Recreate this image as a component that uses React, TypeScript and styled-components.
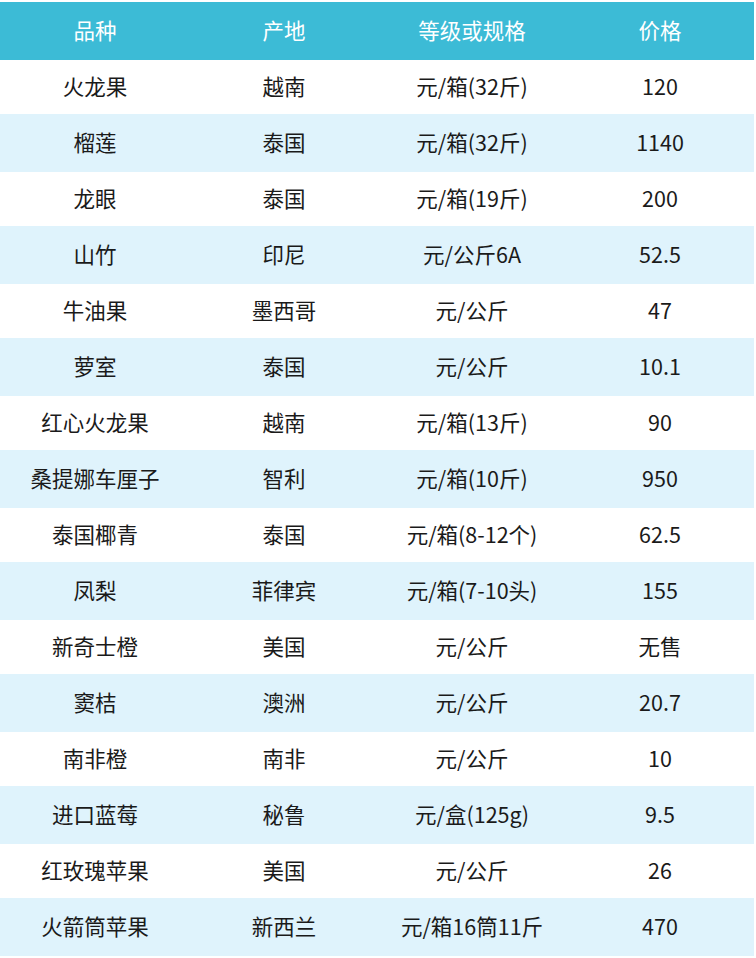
import React from "react";
import styled, { createGlobalStyle } from "styled-components";

const Global = createGlobalStyle`
  html, body { margin: 0; padding: 0; background: #ffffff; }
  body { font-family: "Noto Sans CJK SC", "Noto Sans", sans-serif; }
`;

const Table = styled.div`
  width: 754px;
  margin-top: 2px;
  display: flex;
  flex-direction: column;
`;

const Row = styled.div<{ $kind: "head" | "odd" | "even" }>`
  display: grid;
  grid-template-columns: 190px 188px 188px 188px;
  align-items: center;
  box-sizing: border-box;
  padding-bottom: ${(p) => (p.$kind === "head" ? 3 : 2)}px;
  height: ${(p) => (p.$kind === "odd" ? 54 : 58)}px;
  background: ${(p) =>
    p.$kind === "head" ? "#3cbbd6" : p.$kind === "even" ? "#dff3fc" : "#ffffff"};
  color: ${(p) => (p.$kind === "head" ? "#ffffff" : "#1a1a1a")};
`;

const Cell = styled.div`
  text-align: center;
  font-size: 21.5px;
  line-height: 1;
  white-space: nowrap;
`;

const head = ["品种", "产地", "等级或规格", "价格"];
const rows: string[][] = [
  ["火龙果", "越南", "元/箱(32斤)", "120"],
  ["榴莲", "泰国", "元/箱(32斤)", "1140"],
  ["龙眼", "泰国", "元/箱(19斤)", "200"],
  ["山竹", "印尼", "元/公斤6A", "52.5"],
  ["牛油果", "墨西哥", "元/公斤", "47"],
  ["萝室", "泰国", "元/公斤", "10.1"],
  ["红心火龙果", "越南", "元/箱(13斤)", "90"],
  ["桑提娜车厘子", "智利", "元/箱(10斤)", "950"],
  ["泰国椰青", "泰国", "元/箱(8-12个)", "62.5"],
  ["凤梨", "菲律宾", "元/箱(7-10头)", "155"],
  ["新奇士橙", "美国", "元/公斤", "无售"],
  ["窦桔", "澳洲", "元/公斤", "20.7"],
  ["南非橙", "南非", "元/公斤", "10"],
  ["进口蓝莓", "秘鲁", "元/盒(125g)", "9.5"],
  ["红玫瑰苹果", "美国", "元/公斤", "26"],
  ["火箭筒苹果", "新西兰", "元/箱16筒11斤", "470"],
];

export default function App() {
  return (
    <>
      <Global />
      <Table>
        <Row $kind="head">
          {head.map((h) => (
            <Cell key={h}>{h}</Cell>
          ))}
        </Row>
        {rows.map((r, i) => (
          <Row key={i} $kind={i % 2 === 0 ? "odd" : "even"}>
            {r.map((c, j) => (
              <Cell key={j}>{c}</Cell>
            ))}
          </Row>
        ))}
      </Table>
    </>
  );
}
